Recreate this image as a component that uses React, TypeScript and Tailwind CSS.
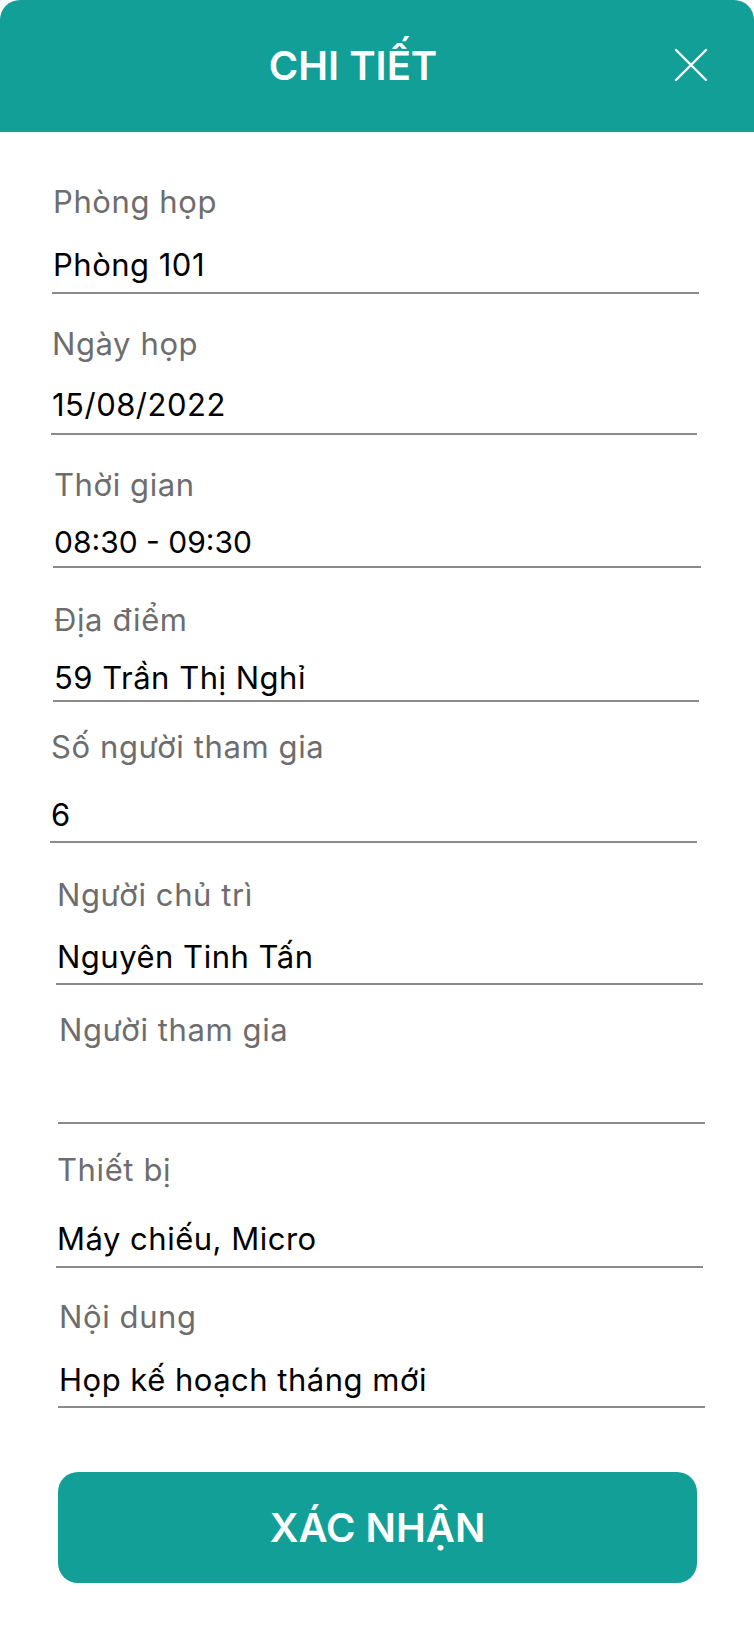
type Field = {
  label: string;
  value?: string;
  box: string; // margin-top + x offset + width of the field (line width)
  labelGap: string; // space between label and value
  lineGap: string; // space between value and underline
  valueSize?: string;
};

const fields: Field[] = [
  { label: "Phòng họp", value: "Phòng 101", box: "mt-[54px] ml-[52px] w-[647px]", labelGap: "mt-[32px]", lineGap: "mt-[12px]" },
  { label: "Ngày họp", value: "15/08/2022", box: "mt-[34px] ml-[51px] w-[646px]", labelGap: "mt-[30px]", lineGap: "mt-[13px]" },
  { label: "Thời gian", value: "08:30 - 09:30", box: "mt-[34px] ml-[53px] w-[648px]", labelGap: "mt-[27px]", lineGap: "mt-[9px]", valueSize: "text-[30px] tracking-normal" },
  { label: "Địa điểm", value: "59 Trần Thị Nghỉ", box: "mt-[36px] ml-[53px] w-[646px]", labelGap: "mt-[27px]", lineGap: "mt-[7px]" },
  { label: "Số người tham gia", value: "6", box: "mt-[29px] ml-[50px] w-[647px]", labelGap: "mt-[37px]", lineGap: "mt-[11px]" },
  { label: "Người chủ trì", value: "Nguyên Tinh Tấn", box: "mt-[36px] ml-[56px] w-[647px]", labelGap: "mt-[31px]", lineGap: "mt-[11px]" },
  { label: "Người tham gia", box: "mt-[29px] ml-[58px] w-[647px]", labelGap: "mt-0", lineGap: "mt-[77px]" },
  { label: "Thiết bị", value: "Máy chiếu, Micro", box: "mt-[30px] ml-[56px] w-[647px]", labelGap: "mt-[38px]", lineGap: "mt-[12px]" },
  { label: "Nội dung", value: "Họp kế hoạch tháng mới", box: "mt-[33px] ml-[58px] w-[647px]", labelGap: "mt-[32px]", lineGap: "mt-[11px]" },
];

function DetailField({ field }: { field: Field }) {
  return (
    <div className={field.box}>
      <div className="pl-[1px] text-[31px] leading-none tracking-[0.6px] text-[#6d6d6d]">{field.label}</div>
      {field.value && (
        <div className={`${field.labelGap} pl-[1px] ${field.valueSize ?? "text-[31px] tracking-[0.5px]"} leading-none text-black`}>
          {field.value}
        </div>
      )}
      <div className={`${field.lineGap} h-[2px] bg-[#8a8a8a]`} />
    </div>
  );
}

export default function App() {
  return (
    <div className="min-h-[1652px] w-[754px] bg-white font-['Inter',sans-serif]">
      <div className="relative flex h-[132px] items-center rounded-t-[20px] bg-[#119f97] pr-[48px]">
        <h1 className="flex-1 text-center text-[40px] font-semibold leading-none text-white">CHI TIẾT</h1>
        <button className="absolute right-[46px] top-[48px] text-white">
          <svg width="34" height="34" viewBox="0 0 34 34" fill="none" stroke="currentColor" strokeWidth={2.4} strokeLinecap="round">
            <path d="M2 2L32 32M32 2L2 32" />
          </svg>
        </button>
      </div>

      <div className="pb-[69px]">
        {fields.map((f) => (
          <DetailField key={f.label} field={f} />
        ))}

        <button className="ml-[58px] mt-[64px] flex h-[111px] w-[639px] items-center justify-center rounded-[20px] bg-[#119f97] text-[40px] font-semibold leading-none text-white">
          XÁC NHẬN
        </button>
      </div>
    </div>
  );
}
